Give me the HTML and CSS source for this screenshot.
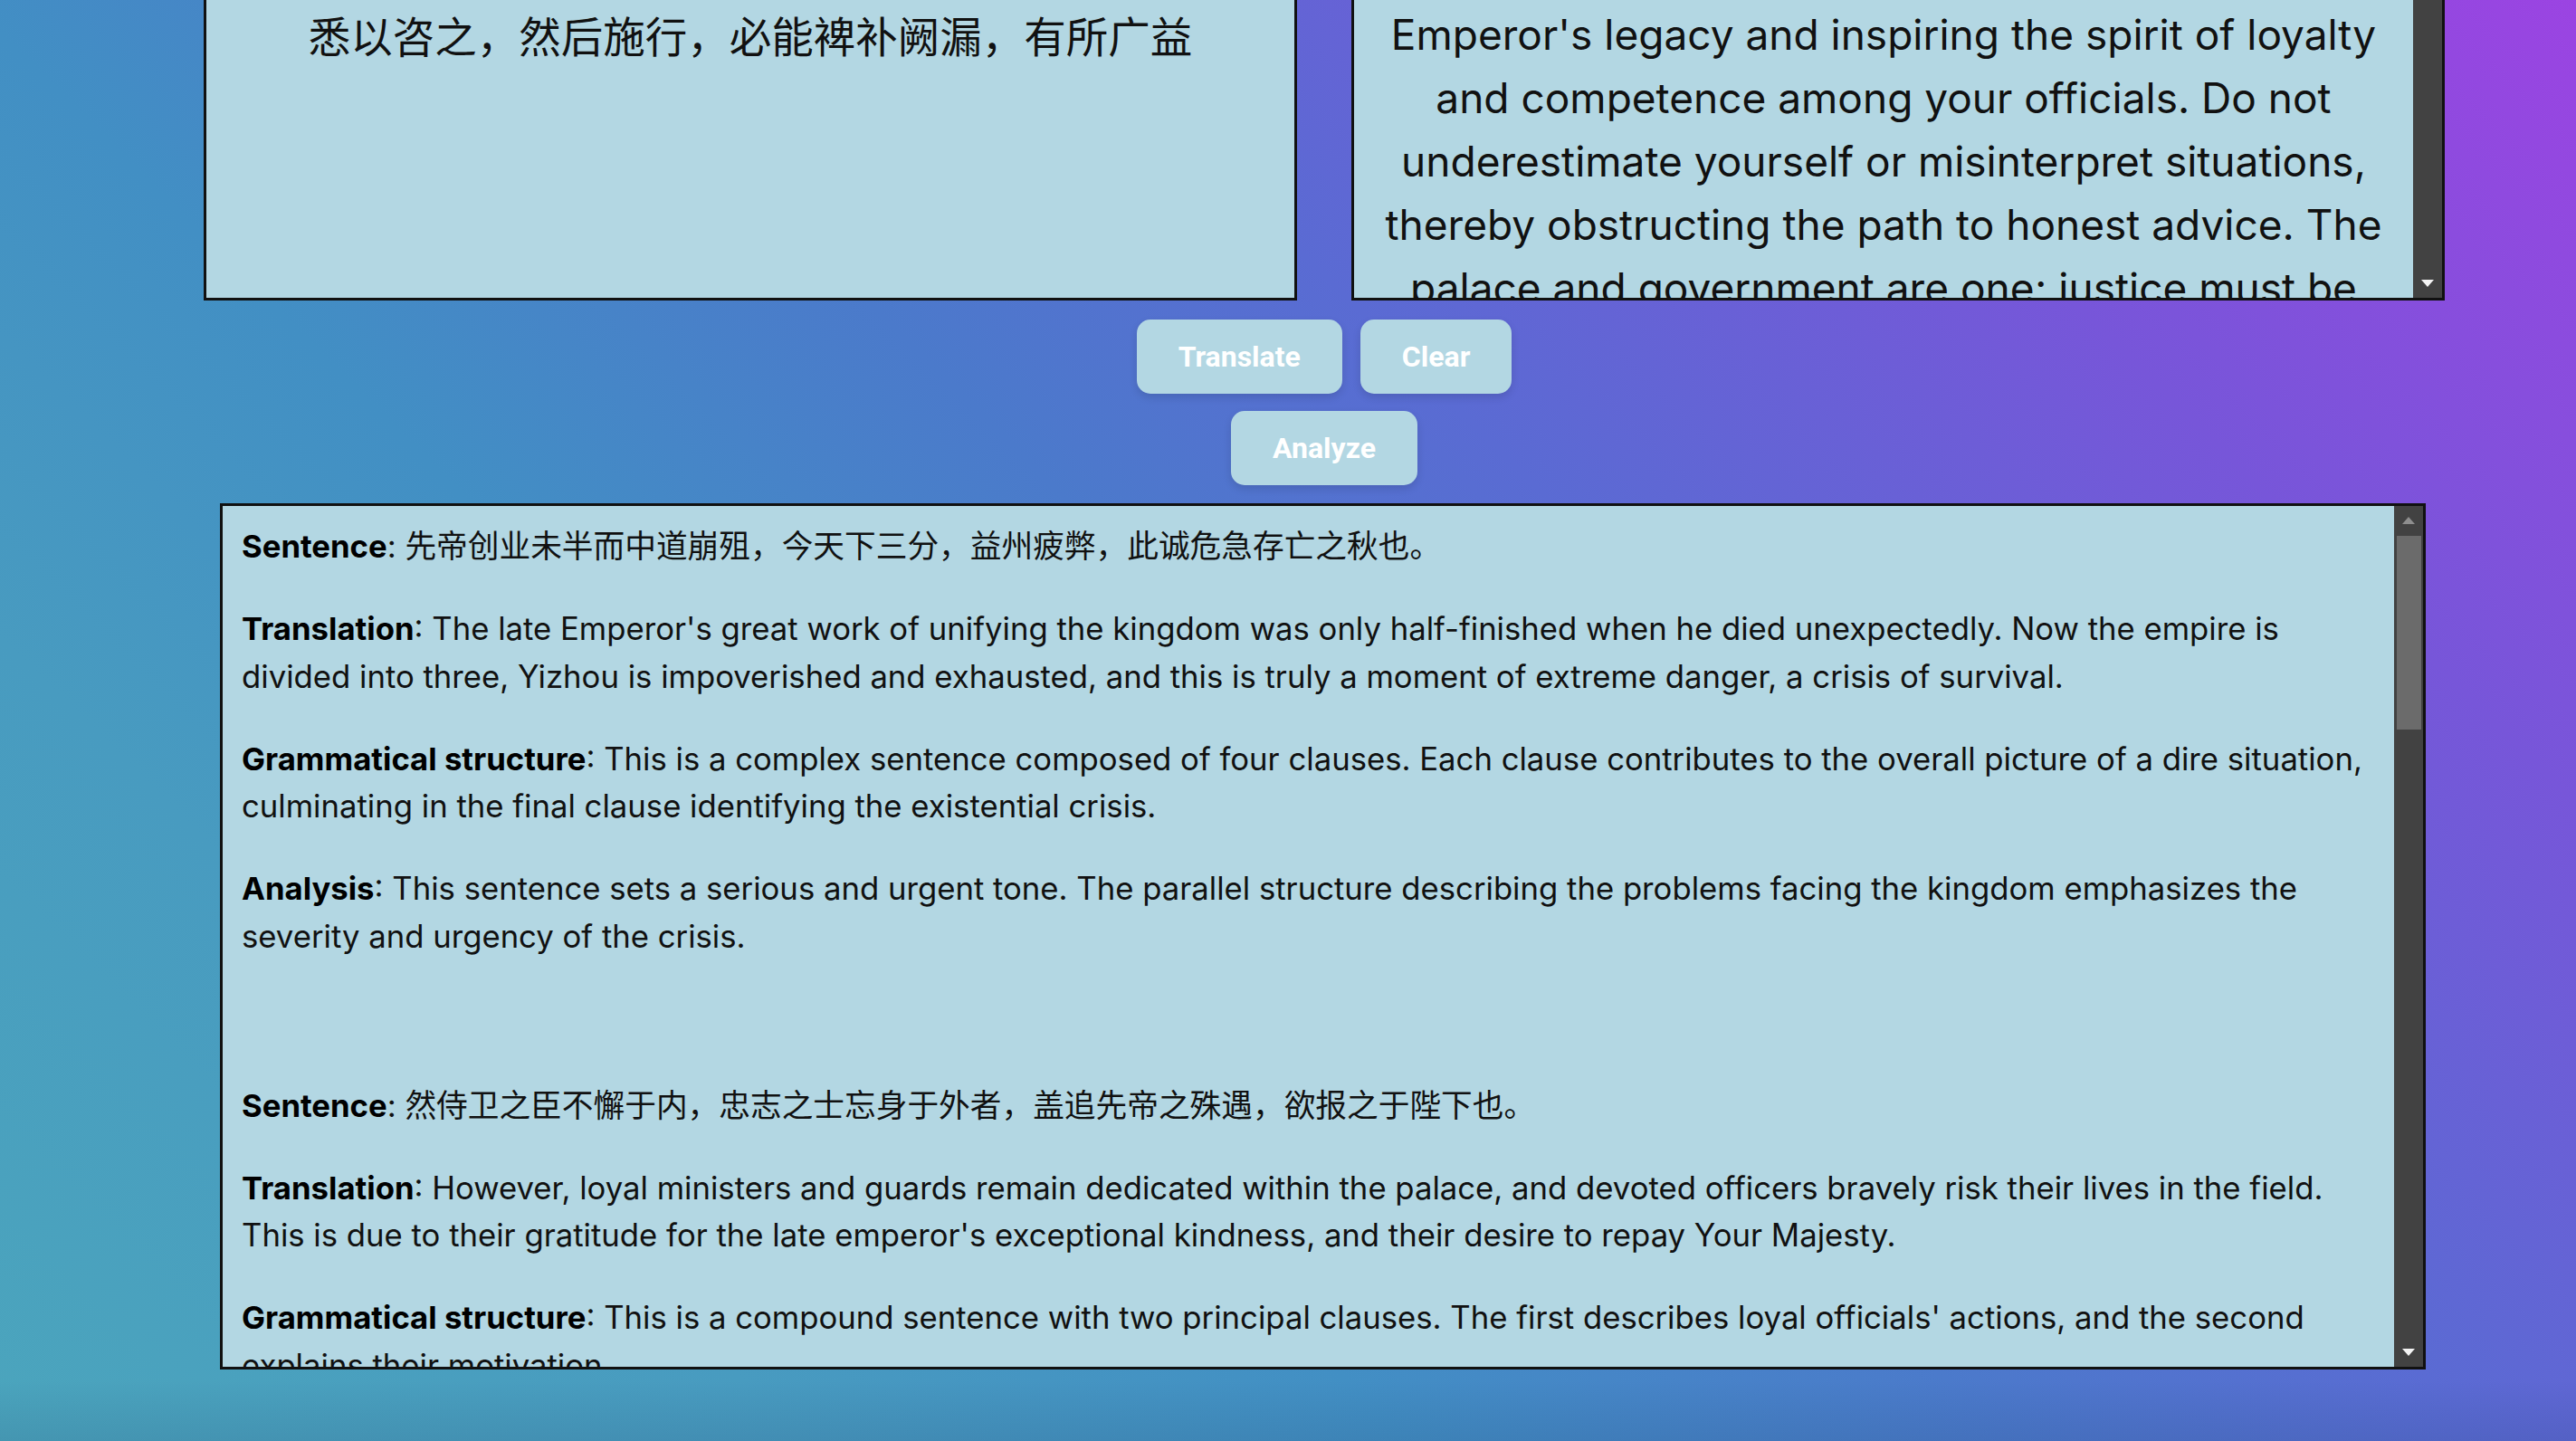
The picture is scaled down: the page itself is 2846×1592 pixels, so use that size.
FILE: index.html
```html
<!DOCTYPE html>
<html lang="en">
<head>
<meta charset="utf-8">
<title>Classical Chinese Translator</title>
<link rel="stylesheet" href="styles.css">
</head>
<body>
<div class="app">
  <div class="io-row">
    <div class="box">
      <div class="pane src-text">悉以咨之，然后施行，必能裨补阙漏，有所广益</div>
    </div>
    <div class="box">
      <div class="pane out-text">Emperor's legacy and inspiring the spirit of loyalty<br>and competence among your officials. Do not<br>underestimate yourself or misinterpret situations,<br>thereby obstructing the path to honest advice. The<br>palace and government are one; justice must be<br>applied equally to all.</div>
      <div class="sbar">
        <span class="sb-spacer"></span>
        <span class="sb-btn"><svg viewBox="0 0 14 8"><path d="M0 0 L14 0 L7 8 Z"/></svg></span>
      </div>
    </div>
  </div>

  <div class="actions">
    <div class="btn-row">
      <button class="btn">Translate</button>
      <button class="btn">Clear</button>
    </div>
    <div class="btn-row">
      <button class="btn">Analyze</button>
    </div>
  </div>

  <div class="analysis">
    <div class="analysis-pane">
      <div class="entry">
        <p><strong>Sentence</strong>: 先帝创业未半而中道崩殂，今天下三分，益州疲弊，此诚危急存亡之秋也。</p>
        <p><strong>Translation</strong>: The late Emperor's great work of unifying the kingdom was only half-finished when he died unexpectedly. Now the empire is<br>divided into three, Yizhou is impoverished and exhausted, and this is truly a moment of extreme danger, a crisis of survival.</p>
        <p><strong>Grammatical structure</strong>: This is a complex sentence composed of four clauses. Each clause contributes to the overall picture of a dire situation,<br>culminating in the final clause identifying the existential crisis.</p>
        <p><strong>Analysis</strong>: This sentence sets a serious and urgent tone. The parallel structure describing the problems facing the kingdom emphasizes the<br>severity and urgency of the crisis.</p>
      </div>
      <div class="entry">
        <p><strong>Sentence</strong>: 然侍卫之臣不懈于内，忠志之士忘身于外者，盖追先帝之殊遇，欲报之于陛下也。</p>
        <p><strong>Translation</strong>: However, loyal ministers and guards remain dedicated within the palace, and devoted officers bravely risk their lives in the field.<br>This is due to their gratitude for the late emperor's exceptional kindness, and their desire to repay Your Majesty.</p>
        <p><strong>Grammatical structure</strong>: This is a compound sentence with two principal clauses. The first describes loyal officials' actions, and the second<br>explains their motivation.</p>
        <p><strong>Analysis</strong>: The sentence shifts from the crisis to a source of hope, highlighting the loyalty that remains.</p>
      </div>
    </div>
    <div class="sbar">
      <span class="sb-btn disabled"><svg viewBox="0 0 14 8"><path d="M0 8 L7 0 L14 8 Z"/></svg></span>
      <span class="sb-thumb"></span>
      <span class="sb-spacer"></span>
      <span class="sb-btn"><svg viewBox="0 0 14 8"><path d="M0 0 L14 0 L7 8 Z"/></svg></span>
    </div>
  </div>
</div>
</body>
</html>
```

FILE: styles.css
```css
html, body {
  margin: 0;
  height: 100%;
  overflow: hidden;
}

html {
  background:
    linear-gradient(to bottom,
      rgba(20, 40, 90, 0) 1525px,
      rgba(20, 40, 90, 0.12) 1592px),
    linear-gradient(45deg,
      #4ba5bd 0%,
      #489bc0 20%,
      #428fc4 35%,
      #4b7acb 50%,
      #5a6bd3 62%,
      #7756d9 80%,
      #9b44e2 100%);
}

.app {
  width: 100%;
  margin-left: 40px;
  box-sizing: border-box;
  padding: 0 185px 32px;
  font-family: Inter, "Noto Sans CJK SC", sans-serif;
  color: #111;
}

.io-row {
  display: grid;
  grid-template-columns: 1fr 1fr;
  gap: 60px;
  margin-top: -30px;
}

.box {
  height: 362px;
  box-sizing: border-box;
  border: 3px solid #111;
  background: #b3d7e3;
  display: flex;
  overflow: hidden;
}

.pane {
  flex: 1;
  min-width: 0;
  overflow: hidden;
  text-align: center;
  white-space: nowrap;
}

.src-text {
  font-size: 46.5px;
  line-height: 70px;
  padding-top: 33px;
}

.out-text {
  font-size: 46px;
  line-height: 70px;
  padding-top: 30px;
}

.sbar {
  width: 32px;
  flex: none;
  background: #424242;
  display: flex;
  flex-direction: column;
}

.sb-spacer {
  flex: 1;
}

.sb-btn {
  height: 32px;
  flex: none;
  display: flex;
  align-items: center;
  justify-content: center;
}

.sb-btn svg {
  width: 14px;
  height: 8px;
  fill: #f4f4f4;
}

.sb-btn.disabled svg {
  fill: #8e8e8e;
}

.sb-thumb {
  height: 214px;
  flex: none;
  margin: 1px 2px 0 3px;
  background: #6b6b6b;
}

.actions {
  display: flex;
  flex-direction: column;
  align-items: center;
  gap: 19px;
  margin-top: 21px;
}

.btn-row {
  display: flex;
  gap: 20px;
}

.btn {
  font-family: Roboto, "Liberation Sans", sans-serif;
  font-weight: 700;
  font-size: 32px;
  line-height: 36px;
  color: #fff;
  background: #b3d7e3;
  border: 0;
  border-radius: 15px;
  padding: 23px 46px;
  box-shadow: 0 4px 10px rgba(0, 0, 0, 0.12);
}

.analysis {
  margin: 20px 21px 0 18px;
  height: 957px;
  box-sizing: border-box;
  border: 3px solid #111;
  background: #b3d7e3;
  display: flex;
}

.analysis-pane {
  flex: 1;
  min-width: 0;
  overflow: hidden;
  padding: 18px 0 0 21px;
  font-size: 34.7px;
  line-height: 52.5px;
  white-space: nowrap;
}

.entry {
  margin-bottom: 134.5px;
}

.entry p {
  margin: 0 0 38.5px;
}

.entry strong {
  font-weight: 700;
  color: #000;
}
```
